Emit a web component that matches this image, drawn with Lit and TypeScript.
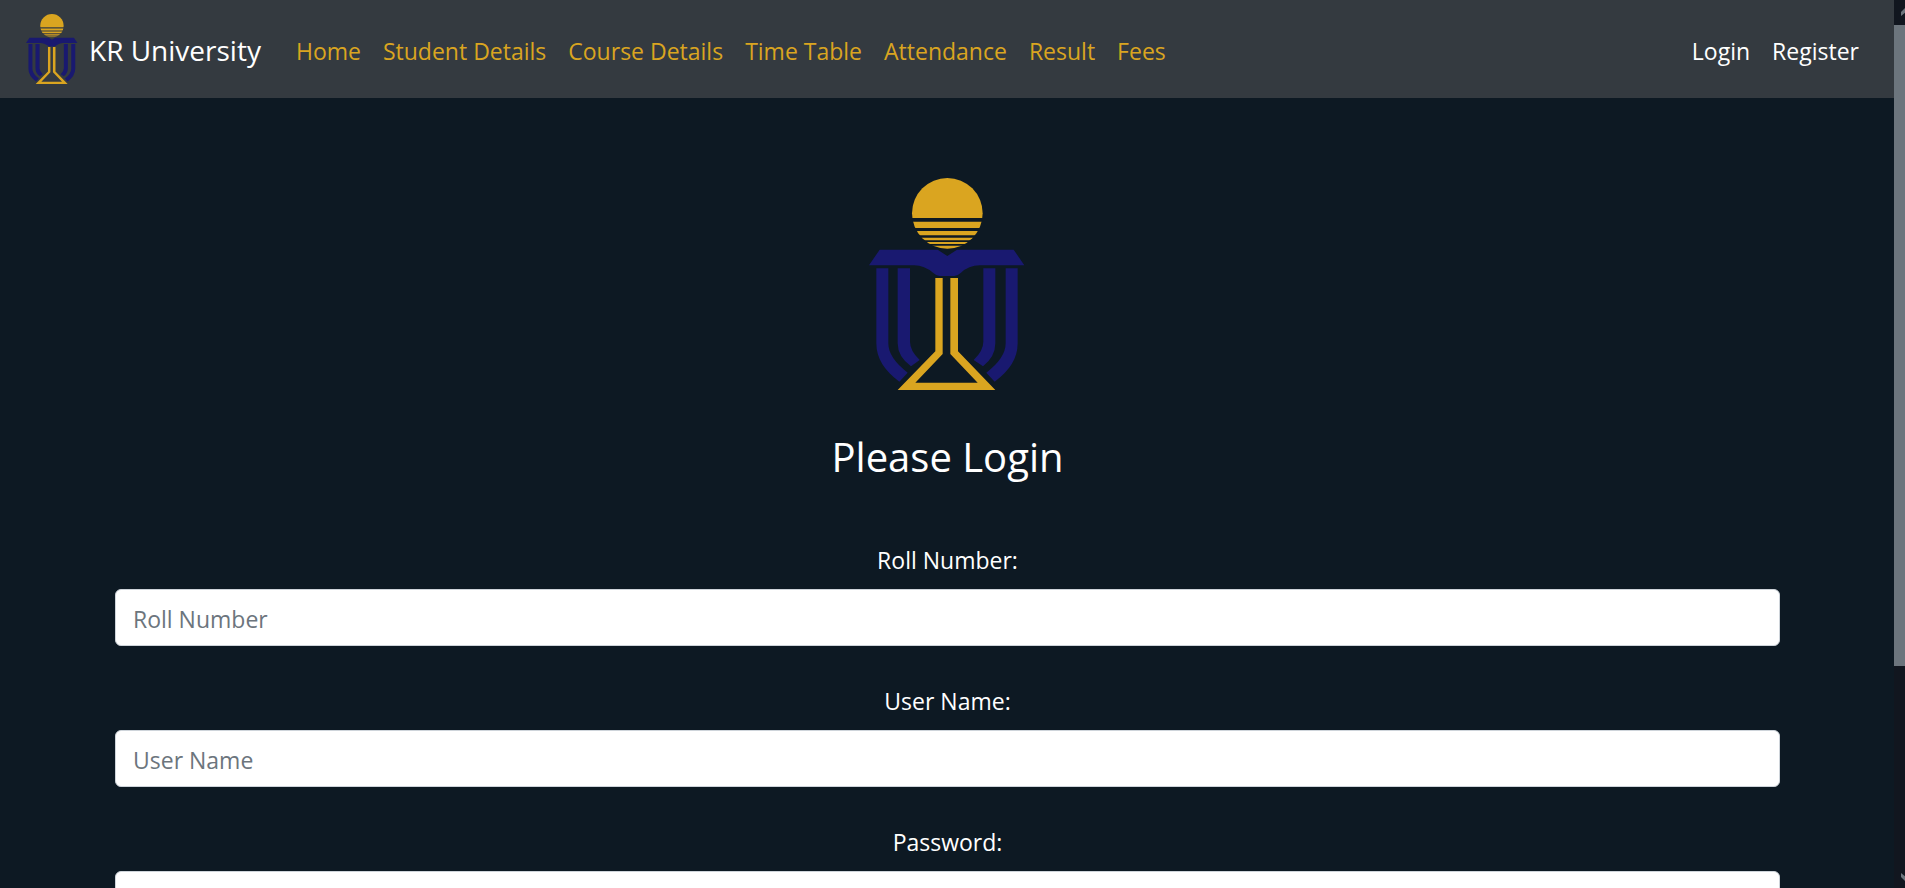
import { LitElement, html, css } from "lit";
import { customElement } from "lit/decorators.js";

@customElement("university-logo")
class UniversityLogo extends LitElement {
  static styles = css`
    :host { display: block; }
    svg { display: block; width: 100%; height: auto; }
    .gold { fill: #daa520; }
    .blue { fill: #191970; }
  `;
  render() {
    return html`
      <svg viewBox="56 54 471 637" role="img" aria-label="KR University">
        <defs>
          <clipPath id="bands">
            <rect x="180" y="50" width="220" height="124" />
            <rect x="180" y="185" width="220" height="19" />
            <rect x="180" y="213" width="220" height="13" />
            <rect x="180" y="233" width="220" height="8" />
            <rect x="180" y="246" width="220" height="6" />
            <rect x="180" y="257" width="220" height="10" />
          </clipPath>
        </defs>
        <circle class="gold" cx="291" cy="160" r="106" clip-path="url(#bands)" />
        <path class="blue" d="M56 316L88 269H262L291 288L320 269H490L522 316H388Q355 317 332 338Q322 347 312 348H268Q258 347 248 338Q222 317 192 316Z" />
        <path class="blue" d="M78 325H114V550Q114 594 172 638L147 665Q78 615 78 550Z" />
        <path class="blue" d="M142 325H179V545Q179 572 208 600L182 619Q142 590 142 550Z" />
        <path class="blue" d="M502 325H466V550Q466 594 408 638L433 665Q502 615 502 550Z" />
        <path class="blue" d="M435 325H399V545Q399 572 370 600L398 619Q435 590 435 550Z" />
        <path class="gold" d="M255 354H277V582L195 668H382L300 582V354H323V574L435 690H142L255 574Z" />
      </svg>
    `;
  }
}

@customElement("app-root")
class AppRoot extends LitElement {
  static styles = css`
    :host {
      display: flex;
      height: 100vh;
      overflow: hidden;
      background: #0d1923;
      color: #fff;
      font: 23px/36px "Segoe UI", "Open Sans", "Noto Sans", sans-serif;
    }
    .page { flex: 1; min-width: 0; overflow: hidden; }
    .navbar {
      display: flex;
      align-items: center;
      box-sizing: border-box;
      min-height: 98px;
      padding: 12px 24px 12px 26px;
      background: #343a40;
    }
    a { color: inherit; text-decoration: none; }
    .brand {
      display: flex;
      align-items: center;
      gap: 11px;
      margin-right: 24px;
      font-size: 28px;
      line-height: 45px;
    }
    .brand university-logo { width: 52px; }
    .brand-name { padding-top: 3px; }
    .links { display: flex; margin: 0; padding: 0; list-style: none; }
    .links a { display: block; padding: 14px 11px 11px; }
    .main-links { flex: 1; color: #daa520; }
    main { padding: 80px 114px 0 115px; text-align: center; }
    .crest { width: 157px; margin: 0 auto; }
    h1 { margin: 42px 0 60px; font-size: 40px; line-height: 50px; font-weight: 400; }
    .field { margin-bottom: 37px; }
    label { display: block; margin-bottom: 11px; }
    input {
      display: block;
      box-sizing: border-box;
      width: 100%;
      height: 57px;
      padding: 10px 17px 8px;
      border: 1px solid #ced4da;
      border-radius: 6px;
      background: #fff;
      color: #495057;
      font: inherit;
    }
    input::placeholder { color: #6c757d; opacity: 1; }
    .scrollbar {
      display: flex;
      flex-direction: column;
      width: 11px;
      overflow: hidden;
      background: #11161f;
    }
    .arrow { flex: none; display: block; width: 17px; height: 25px; fill: #6c757d; }
    .track { flex: 1; }
    .thumb { height: 76.5%; background: #6c757d; }
  `;

  links = ["Home", "Student Details", "Course Details", "Time Table", "Attendance", "Result", "Fees"];
  fields = [
    { id: "roll", label: "Roll Number", type: "text" },
    { id: "user", label: "User Name", type: "text" },
    { id: "password", label: "Password", type: "password" },
  ];

  render() {
    const item = (t: string) => html`<li><a href="#">${t}</a></li>`;
    return html`
      <div class="page">
        <nav class="navbar">
          <a class="brand" href="#"><university-logo></university-logo><span class="brand-name">KR University</span></a>
          <ul class="links main-links">${this.links.map(item)}</ul>
          <ul class="links">${["Login", "Register"].map(item)}</ul>
        </nav>
        <main>
          <university-logo class="crest"></university-logo>
          <h1>Please Login</h1>
          <form>
            ${this.fields.map(
              (f) => html`<div class="field">
                <label for=${f.id}>${f.label}:</label>
                <input id=${f.id} type=${f.type} placeholder=${f.label} />
              </div>`
            )}
          </form>
        </main>
      </div>
      <div class="scrollbar" aria-hidden="true">
        <svg class="arrow" viewBox="0 0 17 25"><path d="M7 12L12 7L17 12V16L12 12L7 16Z" /></svg>
        <div class="track"><div class="thumb"></div></div>
        <svg class="arrow" viewBox="0 0 17 25"><path d="M7 14L12 19L17 14V10L12 14L7 10Z" /></svg>
      </div>
    `;
  }
}
